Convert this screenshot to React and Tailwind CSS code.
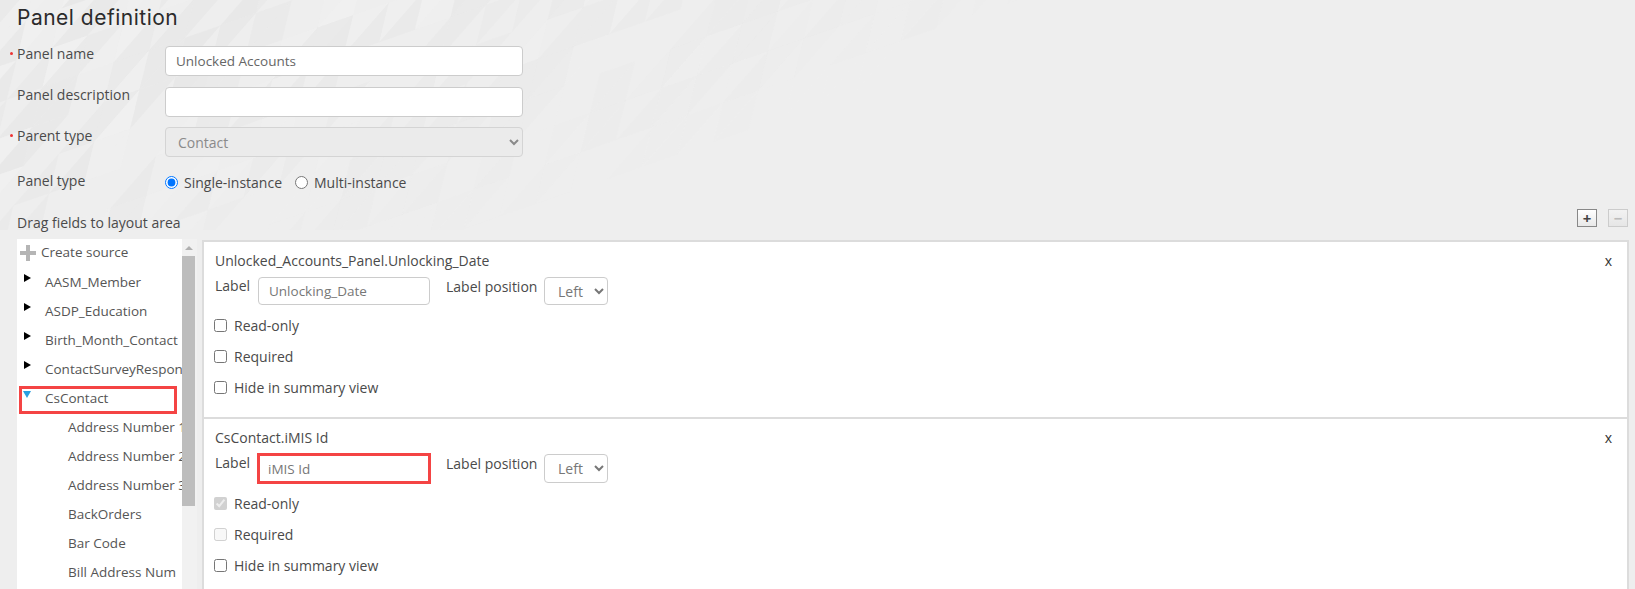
import { useMemo } from "react"

const sourceRows = ["AASM_Member", "ASDP_Education", "Birth_Month_Contact", "ContactSurveyResponse"]
const childRows = ["Address Number 1", "Address Number 2", "Address Number 3", "BackOrders", "Bar Code", "Bill Address Num"]

// faint triangle pattern behind the top of the form
const BackgroundPattern = () => {
  const triangles = useMemo(() => {
    const list = []
    let seed = 17
    const next = () => {
      seed = (seed * 16807) % 2147483647
      return seed / 2147483647
    }
    const ax = 35.6
    const ay = -12.4
    const bx = -9.6
    const by = 39.4
    for (let i = -3; i < 32; i++) {
      for (let j = -6; j < 24; j++) {
        const x = i * ax + j * bx
        const y = i * ay + j * by - 6
        if (y > 230 || y < -50) continue
        const p1 = [x, y]
        const p2 = [x + ax, y + ay]
        const p3 = [x + bx, y + by]
        const p4 = [x + ax + bx, y + ay + by]
        const edge = 1 - (x + y * 2.4) / 1000
        if (edge <= 0 || x < -40) continue
        const fade = Math.min(1, edge * 1.6) * 0.8
        const r1 = next()
        const r2 = next()
        if (r1 > 0.35) list.push({ pts: [p1, p2, p3], dark: r1 > 0.6, o: fade * (0.3 + r1 * 0.7) })
        if (r2 > 0.35) list.push({ pts: [p2, p3, p4], dark: r2 > 0.55, o: fade * (0.3 + r2 * 0.7) })
      }
    }
    return list
  }, [])

  return (
    <svg className="absolute left-0 top-0 pointer-events-none" width="1100" height="230">
      {triangles.map((t, i) => (
        <polygon
          key={i}
          points={t.pts.map((p) => p.join(",")).join(" ")}
          fill={t.dark ? "#e7e7e7" : "#f1f1f1"}
          opacity={t.o}
        />
      ))}
    </svg>
  )
}

const FormRow = ({ label, required, labelClass, className, children }) => (
  <div className={`flex ${className}`}>
    <label className={`relative w-[148px] shrink-0 text-[14px] leading-[20px] font-medium text-[#4a4a4a] ${labelClass}`}>
      {required && <span className="absolute left-[-7px] top-[8px] w-[3px] h-[3px] rounded-full bg-[#e33]" />}
      {label}
    </label>
    {children}
  </div>
)

const CheckRow = ({ label, checked, disabled, className }) => (
  <label className={`flex items-center gap-[7px] h-[20px] text-[14px] font-medium text-[#4a4a4a] ${className}`}>
    <input type="checkbox" defaultChecked={checked} disabled={disabled} className="w-[13px] h-[13px] m-0 ml-[-1px]" />
    {label}
  </label>
)

const FieldCard = ({ title, label, highlight, readOnly, className }) => (
  <div className={`relative pl-[11px] pt-[9px] ${className}`}>
    <div className="text-[14px] leading-[20px] font-medium text-[#4a4a4a]">{title}</div>
    <button className="absolute right-[15px] top-[9px] text-[14px] leading-[20px] text-[#333]">x</button>
    <div className="flex mt-[6px]">
      <span className="w-[43px] mt-[-1px] text-[14px] leading-[20px] font-medium text-[#4a4a4a]">Label</span>
      <input
        readOnly
        value={label}
        className={`w-[172px] pl-[10px] text-[13.5px] text-[#777] bg-white ${
          highlight ? "h-[29px] outline-3 outline-[#f44444] -outline-offset-2" : "h-[28px] border border-[#ccc] rounded-[4px]"
        }`}
      />
      <span className="ml-[16px] w-[98px] text-[14px] leading-[20px] font-medium text-[#4a4a4a]">Label position</span>
      <select className="w-[64px] pl-[9px] text-[14px] text-[#777] bg-white border border-[#ccc] rounded-[4px]">
        <option>Left</option>
      </select>
    </div>
    <CheckRow label="Read-only" checked={readOnly} disabled={readOnly} className="mt-[10px]" />
    <CheckRow label="Required" disabled={readOnly} className="mt-[11px]" />
    <CheckRow label="Hide in summary view" className="mt-[11px]" />
  </div>
)

const SourceTree = () => (
  <div className="relative w-[165px] h-full bg-white overflow-hidden text-[13.5px] text-[#555] whitespace-nowrap">
    <div className="flex items-center h-[29px] pl-[3px] pb-[2px]">
      <svg width="16" height="16" viewBox="0 0 16 16" className="mr-[5px]">
        <path d="M6 0h4v6h6v4h-6v6H6v-6H0V6h6z" fill="#b5b5b5" />
      </svg>
      Create source
    </div>
    {sourceRows.map((name) => (
      <div key={name} className="relative flex items-center h-[29px] pl-[28px]">
        <span className="absolute left-[7px] top-[6px] w-0 h-0 border-y-[4.5px] border-y-transparent border-l-[7px] border-l-black" />
        {name}
      </div>
    ))}
    <div className="relative flex items-center h-[29px] pl-[28px]">
      <span className="absolute left-[6px] top-[7px] w-0 h-0 border-x-[4px] border-x-transparent border-t-[7px] border-t-[#2a9fe0]" />
      CsContact
      <span className="absolute left-[2px] top-[2px] w-[158px] h-[28px] border-[3px] border-[#f44444]" />
    </div>
    {childRows.map((name) => (
      <div key={name} className="flex items-center h-[29px] pl-[51px]">
        {name}
      </div>
    ))}
  </div>
)

export default function App() {
  return (
    <div className="relative w-[1635px] h-[589px] overflow-hidden bg-[#eeeeee] font-['Open_Sans',sans-serif]">
      <BackgroundPattern />
      <div className="relative pl-[17px]">
        <h1 className="pt-[4px] text-[21px] leading-[27px] text-[#2b2b2b] font-['Inter',sans-serif] tracking-[0.5px]">
          Panel definition
        </h1>

        <FormRow label="Panel name" required labelClass="mt-[-2px]" className="mt-[15px]">
          <input
            readOnly
            value="Unlocked Accounts"
            className="w-[358px] h-[30px] pl-[10px] text-[13.5px] text-[#666] bg-white border border-[#ccc] rounded-[4px]"
          />
        </FormRow>
        <FormRow label="Panel description" labelClass="mt-[-2px]" className="mt-[11px]">
          <input readOnly className="w-[358px] h-[30px] bg-white border border-[#ccc] rounded-[4px]" />
        </FormRow>
        <FormRow label="Parent type" required labelClass="mt-[-1px]" className="mt-[10px]">
          <select disabled className="w-[358px] h-[30px] pl-[8px] text-[14px] text-[#8a8a8a] bg-[#ebebeb] border border-[#d4d4d4] rounded-[4px] opacity-100">
            <option>Contact</option>
          </select>
        </FormRow>
        <FormRow label="Panel type" labelClass="mt-[-1px]" className="mt-[15px]">
          <div className="flex items-center h-[20px] text-[14px] font-medium text-[#4a4a4a]">
            <input type="radio" name="panelType" defaultChecked className="w-[13px] h-[13px] m-0 mr-[6px]" />
            Single-instance
            <input type="radio" name="panelType" className="w-[13px] h-[13px] m-0 ml-[13px] mr-[6px]" />
            Multi-instance
          </div>
        </FormRow>

        <div className="flex items-start justify-between mt-[21px] pr-[7px]">
          <span className="text-[14px] leading-[20px] font-medium text-[#4a4a4a]">Drag fields to layout area</span>
          <div className="flex gap-[11px] mt-[-4px]">
            <button className="flex items-center justify-center w-[20px] h-[18px] border border-[#888] bg-gradient-to-b from-white to-[#e8e8e8] text-[#444] text-[15px] leading-none font-bold">
              +
            </button>
            <button className="flex items-center justify-center w-[20px] h-[18px] border border-[#ccc] bg-gradient-to-b from-[#f2f2f2] to-[#e6e6e6] text-[#bbb] text-[15px] leading-none font-bold">
              −
            </button>
          </div>
        </div>
      </div>

      <div className="flex absolute left-[17px] top-[239px] right-[6px] bottom-0">
        <SourceTree />
        <div className="relative w-[15px] h-full bg-[#f1f1f1]">
          <span className="absolute left-[3px] top-[7px] w-0 h-0 border-x-[4px] border-x-transparent border-b-[4px] border-b-[#b0b0b0]" />
          <div className="absolute left-0 top-[17px] w-[13px] h-[250px] bg-[#bdbdbd]" />
        </div>
        <div className="ml-[5px] flex-1 mt-[1px] bg-white border-l-2 border-r-2 border-t-2 border-[#dcdcdc] flex flex-col">
          <FieldCard title="Unlocked_Accounts_Panel.Unlocking_Date" label="Unlocking_Date" className="h-[177px] border-b-2 border-[#dcdcdc]" />
          <FieldCard title="CsContact.iMIS Id" label="iMIS Id" highlight readOnly className="flex-1" />
        </div>
      </div>
    </div>
  )
}
